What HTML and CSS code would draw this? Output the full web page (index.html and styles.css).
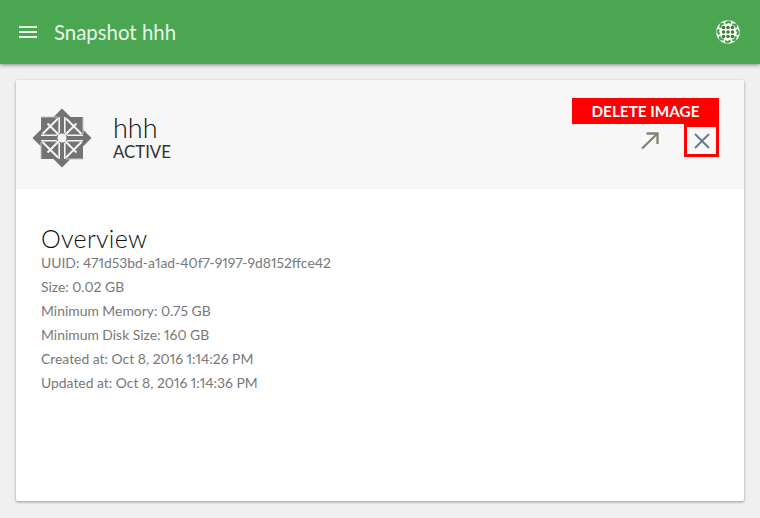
FILE: index.html
```html
<!DOCTYPE html>
<html lang="en">
<head>
<meta charset="utf-8">
<title>Snapshot hhh</title>
<link rel="stylesheet" href="styles.css">
</head>
<body>
<header class="topbar">
  <svg class="menu-icon" width="18" height="12" viewBox="0 0 18 12"><path d="M0 0h18v2H0zM0 5h18v2H0zM0 10h18v2H0z" fill="#e8f5e9"/></svg>
  <h1 class="title">Snapshot hhh</h1>
  <svg class="avatar" width="24" height="24" viewBox="0 0 24 24">
    <defs>
      <path id="swirl" d="M12 .5c2.500 0 3.500 1.500 3 3.500l-2.500-1L10 4.500 9 2.500z"/>
    </defs>
    <circle cx="12" cy="12" r="11.800" fill="#fff"/>
    <g fill="#4ba651">
      <use href="#swirl"/>
      <use href="#swirl" transform="rotate(45 12 12)"/>
      <use href="#swirl" transform="rotate(90 12 12)"/>
      <use href="#swirl" transform="rotate(135 12 12)"/>
      <use href="#swirl" transform="rotate(180 12 12)"/>
      <use href="#swirl" transform="rotate(225 12 12)"/>
      <use href="#swirl" transform="rotate(270 12 12)"/>
      <use href="#swirl" transform="rotate(315 12 12)"/>
    </g>
    <g fill="#3f7d33">
      <circle cx="7.500" cy="7.500" r="1.800"/><circle cx="12" cy="7.500" r="1.800"/><circle cx="16.500" cy="7.500" r="1.800"/>
      <circle cx="7.500" cy="12" r="1.800"/><circle cx="12" cy="12" r="1.800"/><circle cx="16.500" cy="12" r="1.800"/>
      <circle cx="7.500" cy="16.500" r="1.800"/><circle cx="12" cy="16.500" r="1.800"/><circle cx="16.500" cy="16.500" r="1.800"/>
    </g>
  </svg>
</header>
<main class="page">
  <section class="card">
    <div class="card-head">
      <svg class="logo" width="60" height="60" viewBox="0 0 60 60">
        <defs>
          <g id="quarter">
            <path d="M30 .5 38.500 9h-17z" fill="#737373"/>
            <path d="M27.200 9V25M32.800 9V25" stroke="#f4f4f4" stroke-width="1.600" fill="none"/>
            <path d="M26 10.500 10.500 26M15.500 15.500 27 27" stroke="#f4f4f4" stroke-width="2" fill="none"/>
            <path d="M9 9H26" stroke="#c4c4c4" stroke-width="1" fill="none"/>
          </g>
        </defs>
        <rect x="9" y="9" width="42" height="42" fill="#737373"/>
        <use href="#quarter"/>
        <use href="#quarter" transform="rotate(90 30 30)"/>
        <use href="#quarter" transform="rotate(180 30 30)"/>
        <use href="#quarter" transform="rotate(270 30 30)"/>
        <circle cx="30" cy="30" r="4.500" fill="#f4f4f4"/>
      </svg>
      <div class="identity">
        <div class="name">hhh</div>
        <div class="status">ACTIVE</div>
      </div>
      <div class="actions">
        <div class="delete-label">DELETE IMAGE</div>
        <div class="buttons">
          <button class="icon-btn icon-btn-launch" type="button" aria-label="Launch">
            <svg width="20" height="20" viewBox="0 0 20 20"><path d="M2 17.500 17 3M6.500 2.500H17.500V13" fill="none" stroke="#85826f" stroke-width="2.300"/></svg>
          </button>
          <button class="icon-btn icon-btn-delete" type="button" aria-label="Delete">
            <svg width="16" height="16" viewBox="0 0 16 16"><path d="M1 1 15 15M15 1 1 15" fill="none" stroke="#64788c" stroke-width="1.800"/></svg>
          </button>
        </div>
      </div>
    </div>
    <div class="card-body">
      <h2 class="section-title">Overview</h2>
      <ul class="facts">
        <li>UUID: 471d53bd-a1ad-40f7-9197-9d8152ffce42</li>
        <li>Size: 0.02 GB</li>
        <li>Minimum Memory: 0.75 GB</li>
        <li>Minimum Disk Size: 160 GB</li>
        <li>Created at: Oct 8, 2016 1:14:26 PM</li>
        <li>Updated at: Oct 8, 2016 1:14:36 PM</li>
      </ul>
    </div>
  </section>
</main>
</body>
</html>
```
FILE: styles.css
```css
* { box-sizing: border-box; }
html, body { height: 100%; }
body {
  margin: 0;
  background: #f0f0f0;
  font-family: "Lato", "Open Sans", sans-serif;
  font-feature-settings: "pnum" 1;
  overflow: hidden;
}
.topbar {
  height: 64px;
  background: #4ba651;
  display: flex;
  align-items: center;
  padding: 0 20px 0 19px;
  box-shadow: 0 1px 4px rgba(0, 0, 0, 0.45);
}
.menu-icon { flex: none; }
.title {
  margin: 0 0 0 17px;
  flex: 1;
  font-size: 20.400px;
  font-weight: 400;
  line-height: 24px;
  color: #e8f5e9;
}
.avatar { flex: none; }
.page { padding: 16px 16px 0; }
.card {
  height: 421px;
  background: #fff;
  border-radius: 2px;
  box-shadow: 0 1px 3px rgba(0, 0, 0, 0.4);
  overflow: hidden;
}
.card-head {
  height: 109px;
  background: #f7f7f7;
  display: flex;
  align-items: flex-start;
  padding: 18px 25px 0 16px;
}
.logo { flex: none; margin-top: 10px; }
.identity { margin: 15px 0 0 21px; flex: 1; color: #222; }
.name { font-size: 27px; font-weight: 300; line-height: 30px; color: #111; }
.status { font-size: 16.800px; line-height: 18px; color: #333; }
.actions { width: 147px; }
.delete-label {
  height: 26px;
  background: #f00;
  color: #fff;
  font-size: 15.300px;
  font-weight: 700;
  line-height: 26px;
  text-align: center;
}
.buttons { display: flex; justify-content: flex-end; }
.icon-btn {
  width: 34px;
  height: 33px;
  padding: 0;
  border: 0;
  background: none;
  display: flex;
  align-items: center;
  justify-content: center;
}
.icon-btn svg { display: block; }
.icon-btn-launch { margin-right: 17px; }
.icon-btn-delete { width: 35px; border: 3px solid #f00; }
.card-body { padding: 36px 25px 0; }
.section-title {
  margin: 0;
  font-size: 25px;
  font-weight: 300;
  letter-spacing: 0.300px;
  line-height: 26px;
  color: #111;
}
.facts {
  margin: 0;
  padding: 0;
  list-style: none;
  font-size: 13.900px;
  line-height: 24px;
  color: #787878;
}
```
